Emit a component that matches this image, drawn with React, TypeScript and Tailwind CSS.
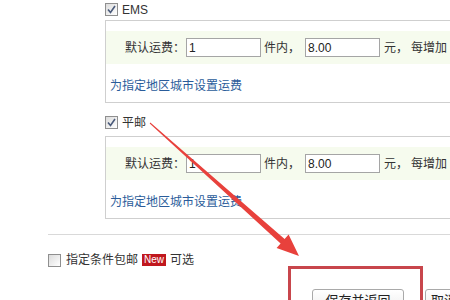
const Check = ({ checked }: { checked?: boolean }) => (
  <span className="flex h-[13px] w-[13px] shrink-0 items-center justify-center border border-[#8f8f8f] bg-gradient-to-br from-[#dcdcdc] to-white">
    {checked && (
      <svg width="9" height="9" viewBox="0 0 9 9">
        <path d="M1 4.5 L3.5 7.5 L8 1" fill="none" stroke="#4a5a7a" strokeWidth="1.6" />
      </svg>
    )}
  </span>
);

const FeeBox = () => (
  <div className="w-[400px] border border-[#cfcfcf] pt-[10px] pb-[9px]">
    <div className="flex h-[33px] items-center bg-[#f6fbee] pl-[19px]">
      <span>默认运费：</span>
      <input
        readOnly
        value="1"
        className="ml-[1px] h-[19px] w-[75px] border border-[#a5a5a5] bg-white px-[2px] text-[12px] text-[#222] outline-none"
      />
      <span className="ml-[3px]">件内，</span>
      <input
        readOnly
        value="8.00"
        className="ml-[5px] h-[19px] w-[75px] border border-[#a5a5a5] bg-white px-[2px] text-[12px] text-[#222] outline-none"
      />
      <span className="ml-[4px]">元，</span>
      <span className="ml-[3px]">每增加</span>
    </div>
    <div className="mt-[15px] pl-[4px] leading-[14px] text-[#2a5c9a]">为指定地区城市设置运费</div>
  </div>
);

export default function App() {
  return (
    <div className="relative h-[300px] w-[450px] overflow-hidden bg-white text-[12px] text-[#333] font-['Liberation_Sans','Noto_Sans_CJK_SC',sans-serif]">
      <div className="pl-[48px] pt-[3px]">
        <div className="ml-[57px]">
          <div className="flex h-[13px] items-center gap-[4px]">
            <Check checked />
            <span>EMS</span>
          </div>
          <div className="mt-[4px]">
            <FeeBox />
          </div>
          <div className="mt-[13px] flex h-[13px] items-center gap-[4px]">
            <Check checked />
            <span>平邮</span>
          </div>
          <div className="mt-[7px]">
            <FeeBox />
          </div>
        </div>
        <div className="mt-[15px] h-px w-[420px] bg-[#d9d9d9]" />
        <div className="mt-[18px] flex h-[14px] items-center">
          <Check />
          <span className="ml-[5px]">指定条件包邮</span>
          <span className="ml-[4px] bg-[#c0181e] px-[2px] text-[10px] leading-[12px] text-white">New</span>
          <span className="ml-[4px]">可选</span>
        </div>
        <div className="mt-[22px] flex items-start pl-[264px]">
          <button className="h-[24px] w-[92px] shrink-0 rounded-[3px] border border-[#a9a9a9] bg-gradient-to-b from-white to-[#ececec] text-[13px] leading-[22px] text-[#222]">
            保存并返回
          </button>
          <button className="ml-[21px] h-[24px] w-[40px] shrink-0 rounded-[3px] border border-[#a9a9a9] bg-gradient-to-b from-white to-[#ececec] text-left pl-[5px] text-[13px] leading-[22px] text-[#222]">
            取消
          </button>
        </div>
      </div>
      <div className="absolute left-[288px] top-[266px] h-[40px] w-[135px] border-[3px] border-[#c8464c]" />
      <svg className="absolute left-0 top-0" width="450" height="300" viewBox="0 0 450 300">
        <polygon
          points="149.7,123.4 280.6,243.5 276.6,248 299,256 288.6,234.6 284.6,239.1 150.3,122.6"
          fill="#e8413c"
        />
      </svg>
    </div>
  );
}
